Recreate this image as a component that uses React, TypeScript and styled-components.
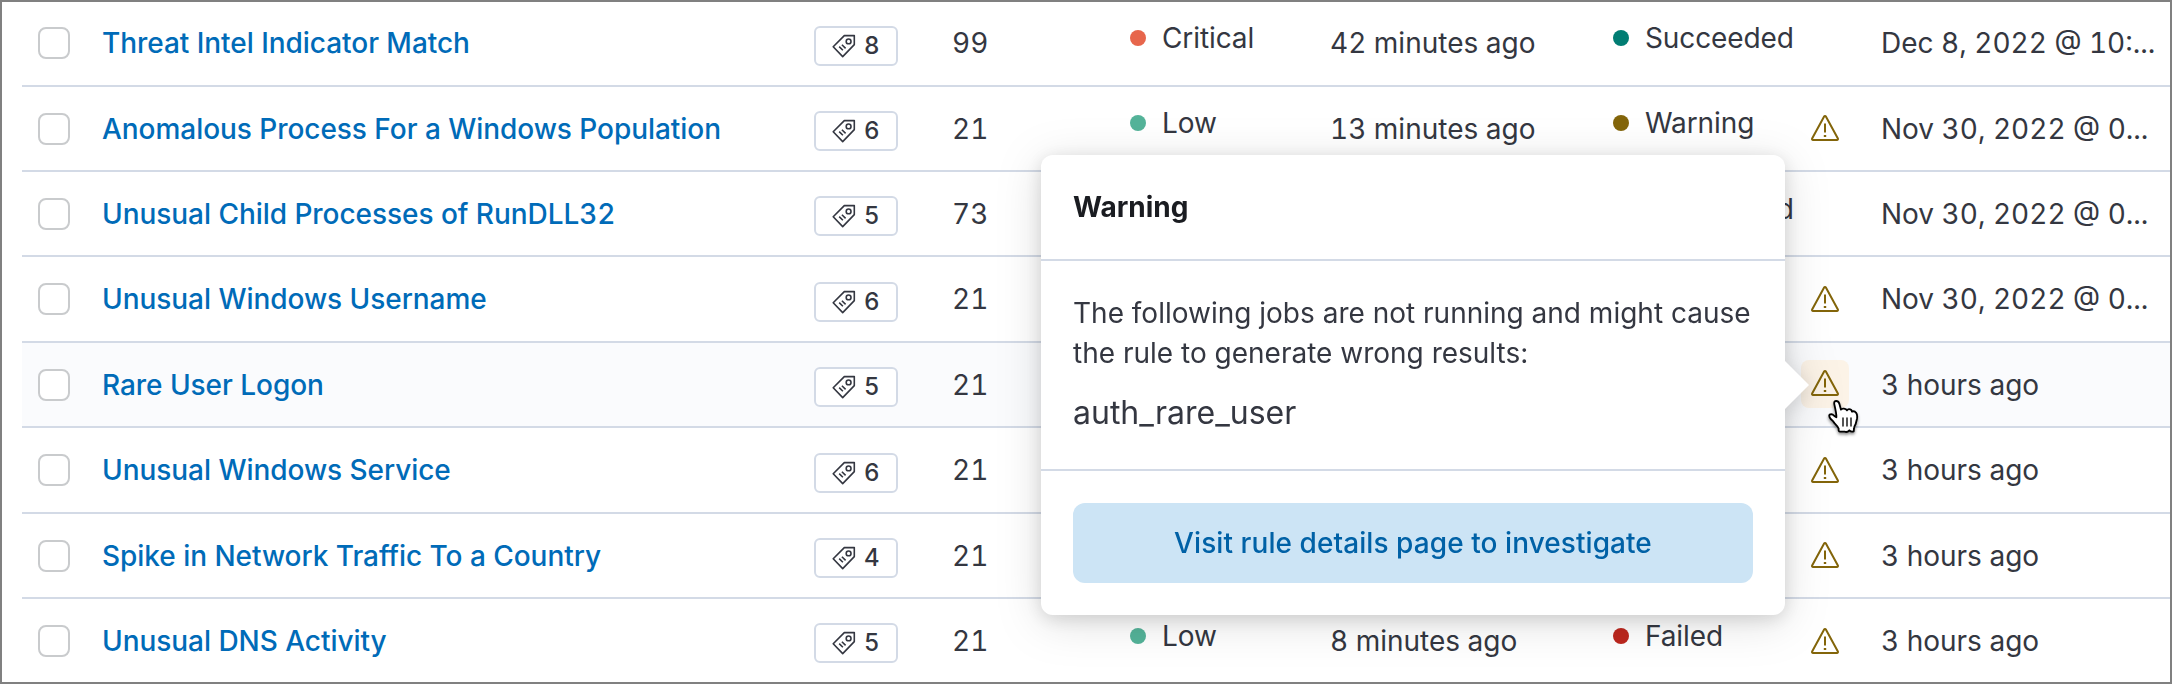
import React from "react";
import styled, { createGlobalStyle } from "styled-components";

const Global = createGlobalStyle`
  *, *::before, *::after { box-sizing: border-box; }
  body { margin: 0; background: #fff; }
`;

const Frame = styled.main`
  position: relative;
  width: 2172px;
  height: 684px;
  overflow: hidden;
  border: 2px solid #808080;
  padding-left: 20px;
  background: #fff;
  color: #343741;
  font-family: Inter, "Liberation Sans", sans-serif;
  font-size: 28px;
  line-height: 42px;
`;

const Table = styled.div`
  display: flex;
  flex-direction: column;
  margin-top: -0.8px;
  font-feature-settings: "calt" 1, "kern" 1, "tnum" 1;
`;

const Row = styled.div<{ $hovered?: boolean }>`
  display: grid;
  grid-template-columns: 80px 712px 138px 178px 200px 283px 196px 72px 1fr;
  align-items: center;
  flex: none;
  height: 85.4px;
  border-bottom: 2px solid #d3dae6;
  background: ${(p) => (p.$hovered ? "#fafbfd" : "transparent")};
  &:last-child { border-bottom-color: transparent; }
`;

const Checkbox = styled.span`
  width: 32px;
  height: 32px;
  margin-left: 16px;
  margin-top: 0.6px;
  border: 2px solid #c9cbcd;
  border-radius: 8px;
  background: #fff;
`;

const RuleLink = styled.a`
  margin-top: 0.6px;
  color: #006bb8;
  font-weight: 500;
  letter-spacing: -0.05px;
  white-space: nowrap;
`;

const TagBadge = styled.span`
  display: flex;
  align-items: center;
  gap: 8px;
  width: 84px;
  height: 40px;
  padding-left: 16px;
  margin-top: 5.5px;
  border: 2px solid #d3dae6;
  border-radius: 6px;
  background: #fff;
  font-size: 24px;
  font-weight: 500;
  line-height: 36px;
`;

const Text = styled.span`
  margin-top: 0.6px;
  white-space: nowrap;
`;

const Health = styled.span`
  display: flex;
  align-items: center;
  gap: 16px;
  margin-top: -10px;
  letter-spacing: -0.1px;
  white-space: nowrap;
`;

const Dot = styled.i<{ $color: string }>`
  width: 16px;
  height: 16px;
  border-radius: 50%;
  background: ${(p) => p.$color};
`;

const IconButton = styled.span<{ $active?: boolean }>`
  display: flex;
  align-items: center;
  justify-content: center;
  width: 48px;
  height: 48px;
  margin-left: -8px;
  margin-top: ${(p) => (p.$active ? "-1px" : "2px")};
  border-radius: 8px;
  background: ${(p) => (p.$active ? "#fcf3e7" : "transparent")};
`;

const Popover = styled.section`
  position: absolute;
  left: 1039px;
  top: 153px;
  width: 744px;
  height: 460px;
  border-radius: 12px;
  background: #fff;
  filter: drop-shadow(0 4px 9px rgba(0, 0, 0, 0.12)) drop-shadow(0 7px 22px rgba(0, 0, 0, 0.13));
  &::after {
    content: "";
    position: absolute;
    left: 100%;
    top: 206px;
    border: 24px solid transparent;
    border-left-color: #fff;
    border-right-width: 0;
  }
`;

const PopoverTitle = styled.h2`
  margin: 0;
  height: 106px;
  padding: 32px;
  border-bottom: 2px solid #d3dae6;
  color: #1a1c21;
  font-size: 28px;
  font-weight: 700;
  line-height: 40px;
`;

const PopoverBody = styled.div`
  height: 210px;
  padding: 32px;
  border-bottom: 2px solid #d3dae6;
  line-height: 40px;
  white-space: nowrap;
`;

const Message = styled.p`
  margin: 0 0 20px;
`;

const JobName = styled.p`
  margin: 0;
  font-size: 32px;
`;

const PopoverFooter = styled.div`
  padding: 32px;
`;

const ActionButton = styled.div`
  display: flex;
  align-items: center;
  justify-content: center;
  height: 80px;
  border-radius: 12px;
  background: #cce4f5;
  color: #0061a6;
  font-weight: 500;
  letter-spacing: 0.07px;
`;

const Cursor = styled.svg`
  position: absolute;
  left: 1822px;
  top: 394px;
  filter: drop-shadow(0 2px 1.5px rgba(0, 0, 0, 0.45));
`;

const TagIcon = () => (
  <svg width="24" height="24" viewBox="0 0 24 24" fill="none" stroke="#343741" strokeWidth="1.6" strokeLinejoin="round">
    <path d="M12.3 1.6H22.3V10.6L10.7 22.6L1.2 12.7z" />
    <circle cx="16.6" cy="7.4" r="2.4" />
    <path d="M7.2 12.6l3.7 3.7M9.9 10.7l3.7 3.7" />
  </svg>
);

const WarningIcon = () => (
  <svg width="32" height="32" viewBox="0 0 16 16" fill="#83650a">
    <path fillRule="evenodd" d="M2 14a1 1 0 01-.878-1.479l6-11a1 1 0 011.756 0l6 11A1 1 0 0114 14H2zm0-1h12L8 2 2 13z" />
    <path d="M7.5 5.3h1v4.5h-1zM7.4 11h1.2v1H7.4z" />
  </svg>
);

const levels = { Critical: "#e7664c", Low: "#54b399" };
const statuses = { Succeeded: "#017d73", Warning: "#83650a", Failed: "#bd271e" };

type Rule = {
  name: string;
  tags: number;
  score: number;
  severity?: keyof typeof levels;
  lastRun?: string;
  status?: keyof typeof statuses;
  alert?: boolean;
  updated: string;
};

const rules: Rule[] = [
  { name: "Threat Intel Indicator Match", tags: 8, score: 99, severity: "Critical", lastRun: "42 minutes ago", status: "Succeeded", updated: "Dec 8, 2022 @ 10:..." },
  { name: "Anomalous Process For a Windows Population", tags: 6, score: 21, severity: "Low", lastRun: "13 minutes ago", status: "Warning", alert: true, updated: "Nov 30, 2022 @ 0..." },
  { name: "Unusual Child Processes of RunDLL32", tags: 5, score: 73, status: "Succeeded", updated: "Nov 30, 2022 @ 0..." },
  { name: "Unusual Windows Username", tags: 6, score: 21, alert: true, updated: "Nov 30, 2022 @ 0..." },
  { name: "Rare User Logon", tags: 5, score: 21, alert: true, updated: "3 hours ago" },
  { name: "Unusual Windows Service", tags: 6, score: 21, alert: true, updated: "3 hours ago" },
  { name: "Spike in Network Traffic To a Country", tags: 4, score: 21, alert: true, updated: "3 hours ago" },
  { name: "Unusual DNS Activity", tags: 5, score: 21, severity: "Low", lastRun: "8 minutes ago", status: "Failed", alert: true, updated: "3 hours ago" },
];

export default function App() {
  return (
    <>
      <Global />
      <Frame>
        <Table>
          {rules.map((rule) => {
            const hovered = rule.name === "Rare User Logon";
            return (
              <Row key={rule.name} $hovered={hovered}>
                <Checkbox />
                <RuleLink>{rule.name}</RuleLink>
                <TagBadge><TagIcon />{rule.tags}</TagBadge>
                <Text>{rule.score}</Text>
                {rule.severity ? <Health><Dot $color={levels[rule.severity]} />{rule.severity}</Health> : <span />}
                <Text>{rule.lastRun}</Text>
                {rule.status ? <Health><Dot $color={statuses[rule.status]} />{rule.status}</Health> : <span />}
                {rule.alert ? <IconButton $active={hovered}><WarningIcon /></IconButton> : <span />}
                <Text>{rule.updated}</Text>
              </Row>
            );
          })}
        </Table>
        <Popover>
          <PopoverTitle>Warning</PopoverTitle>
          <PopoverBody>
            <Message>The following jobs are not running and might cause<br />the rule to generate wrong results:</Message>
            <JobName>auth_rare_user</JobName>
          </PopoverBody>
          <PopoverFooter>
            <ActionButton>Visit rule details page to investigate</ActionButton>
          </PopoverFooter>
        </Popover>
        <Cursor width="36" height="40" viewBox="0 0 108 120">
          <path
            d="M31 25Q29 15 37 15Q43 15 46 23L51 41Q53 37 60 38Q67 39 69 43Q74 36 82 42L84 47Q91 43 96 50Q101 56 99 68L95 84Q90 92 90 98L89 106Q82 109 76 103Q70 110 62 107L49 107Q43 108 44 98Q40 90 32 82Q26 74 21 70Q13 60 17 56Q24 52 31 60L37 64Q38 55 31 25Z"
            fill="#fff"
            stroke="#000"
            strokeWidth="5.5"
            strokeLinejoin="round"
          />
          <path d="M57 66V90M69 66V90M81 66V90" stroke="#000" strokeWidth="4" strokeLinecap="round" />
        </Cursor>
      </Frame>
    </>
  );
}
